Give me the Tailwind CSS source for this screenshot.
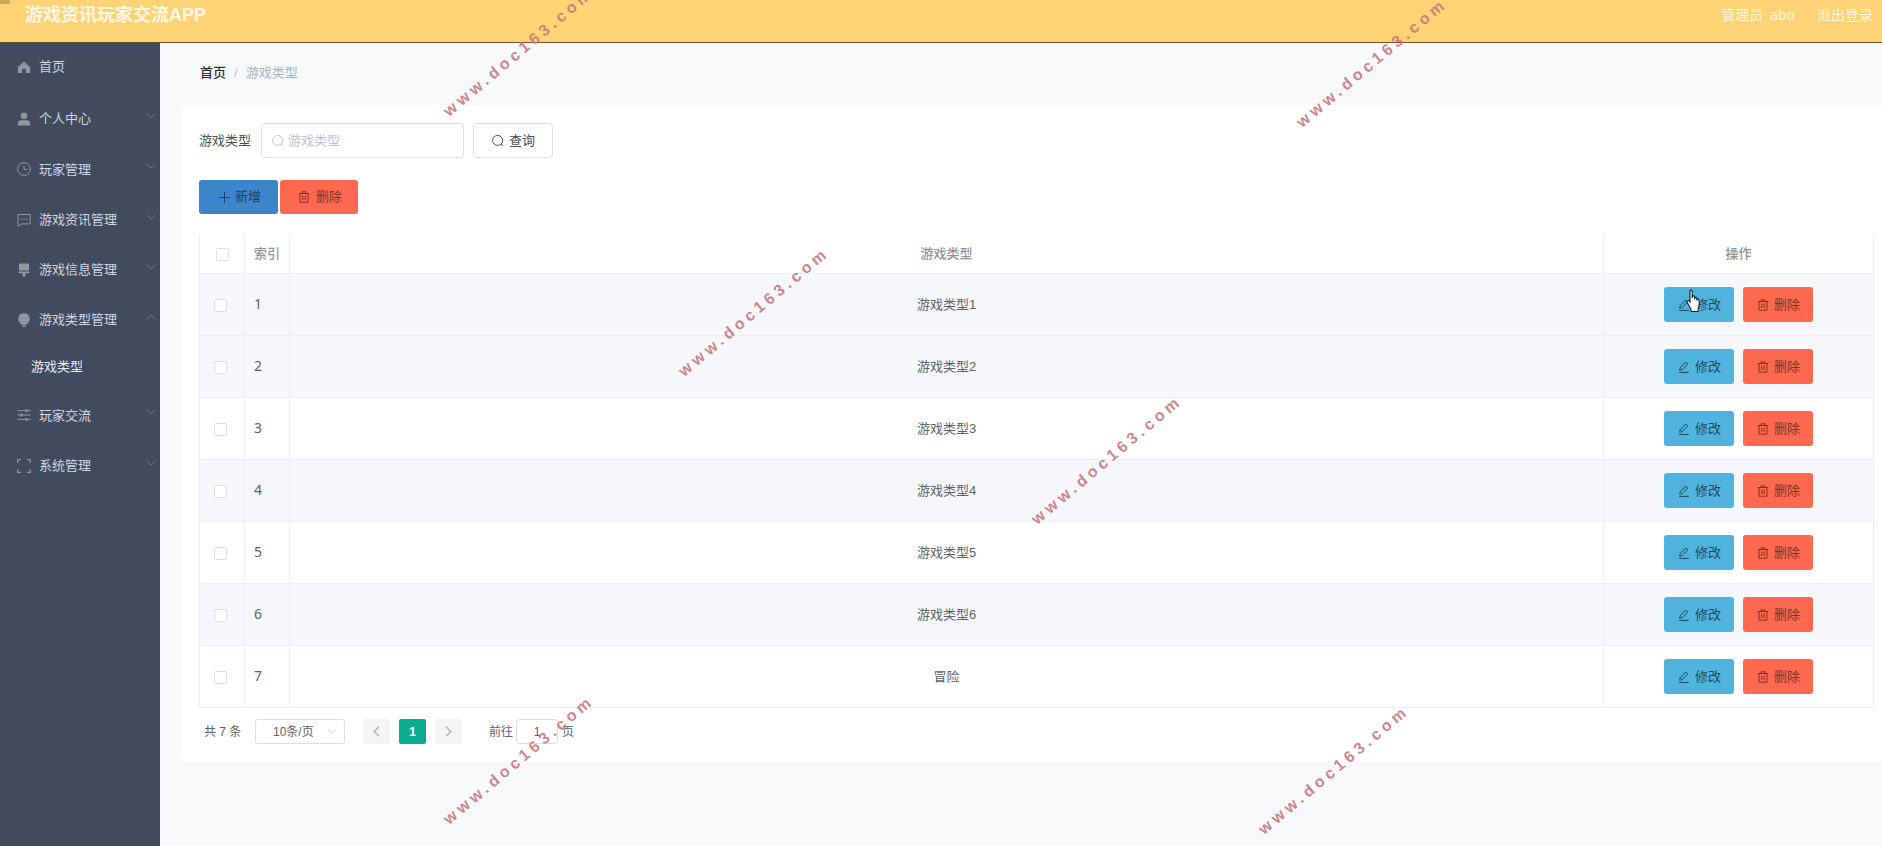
<!DOCTYPE html>
<html lang="zh">
<head>
<meta charset="utf-8">
<title>游戏类型</title>
<script src="https://cdn.jsdelivr.net/npm/@tailwindcss/browser@4"></script>
</head>
<body class="w-[1882px] h-[846px] overflow-hidden relative bg-[#f7f8fa] font-['Liberation_Sans','Noto_Sans_CJK_SC',sans-serif] text-[13px] text-[#606266]">
<svg class="hidden">
  <symbol id="search" viewBox="0 0 14 14"><circle cx="6.6" cy="6.4" r="5" fill="none" stroke="currentColor" stroke-width="1"/><path d="M10.2 10l1.8 2" stroke="currentColor" stroke-width="1" fill="none"/></symbol>
  <symbol id="trash" viewBox="0 0 12 12"><path d="M.8 2.5h10.4M4 2.5V.8h4v1.7M2 2.5v8.7h8V2.5M4.8 4.5v4.6M7.2 4.5v4.6" stroke="currentColor" stroke-width="1" fill="none"/></symbol>
  <symbol id="edit" viewBox="0 0 12 12"><path d="M1.700 9.300l.5-2.600L7.700 1l2 2-5.500 5.600zM1 11.400h10" stroke="currentColor" stroke-width="1" fill="none"/></symbol>
  <symbol id="chev" viewBox="0 0 10 6"><path d="M.7.7L5 5l4.300-4.300" stroke="currentColor" stroke-width="1" fill="none"/></symbol>
  <symbol id="chevup" viewBox="0 0 10 6"><path d="M.7 5.300L5 1l4.300 4.300" stroke="currentColor" stroke-width="1" fill="none"/></symbol>
</svg>

<header class="relative h-[43px] bg-[#fed376] border-b border-[#6e5426] flex items-center justify-between pb-[11px] pl-[25px] pr-[9px] text-white">
  <div class="absolute left-0 top-0 w-[10px] h-[4px] bg-[#cda863]"></div>
  <div class="text-[18px] font-bold text-[#fff8e6]">游戏资讯玩家交流APP</div>
  <div class="flex items-center gap-[22px] text-[14px] text-[#fff6e0]">
    <span class="flex gap-[7px]"><span>管理员</span><span class="tracking-[0.5px]">abo</span></span>
    <span>退出登录</span>
  </div>
</header>

<div class="flex h-[803px]">
  <aside class="w-[160px] shrink-0 bg-[#424b5d] text-[#cdd6e4]">
    <a class="h-[51px] flex items-center pl-[17px] pb-[3px] gap-[8px]">
      <svg class="w-[14px] h-[14px] text-[#8f95a1]" viewBox="0 0 14 14"><path d="M7 1.500L.8 7.200V13h4.400V9h3.600v4h4.400V7.200z" fill="currentColor"/></svg>
      <span>首页</span>
    </a>
    <a class="h-[50.25px] flex items-center pl-[17px] gap-[8px] relative">
      <svg class="w-[14px] h-[14px] text-[#8f95a1]" viewBox="0 0 14 14"><circle cx="7" cy="3.800" r="3.300" fill="currentColor"/><path d="M1 13.500V11c0-1.800 1.600-2.800 3-2.800h6c1.400 0 3 1 3 2.800v2.500z" fill="currentColor"/></svg>
      <span>个人中心</span>
      <svg class="absolute left-[146px] top-[19px] w-[10px] h-[6px] text-[#6d7687]"><use href="#chev"/></svg>
    </a>
    <a class="h-[50.25px] flex items-center pl-[17px] gap-[8px] relative">
      <svg class="w-[14px] h-[14px] text-[#8f95a1]" viewBox="0 0 14 14"><circle cx="7" cy="7" r="6.400" fill="none" stroke="currentColor"/><path d="M7 3.200V7.400h3.400" fill="none" stroke="currentColor"/></svg>
      <span>玩家管理</span>
      <svg class="absolute left-[146px] top-[19px] w-[10px] h-[6px] text-[#6d7687]"><use href="#chev"/></svg>
    </a>
    <a class="h-[50.25px] flex items-center pl-[17px] gap-[8px] relative">
      <svg class="w-[14px] h-[14px] text-[#8f95a1]" viewBox="0 0 14 14"><path d="M1 1.500h12.200v9.400H5L1 13.200z" fill="none" stroke="currentColor"/><circle cx="4.400" cy="6.200" r=".8" fill="currentColor"/><circle cx="7.100" cy="6.200" r=".8" fill="currentColor"/><circle cx="9.800" cy="6.200" r=".8" fill="currentColor"/></svg>
      <span>游戏资讯管理</span>
      <svg class="absolute left-[146px] top-[19px] w-[10px] h-[6px] text-[#6d7687]"><use href="#chev"/></svg>
    </a>
    <a class="h-[50.25px] flex items-center pl-[17px] gap-[8px] relative">
      <svg class="w-[14px] h-[14px] text-[#8f95a1]" viewBox="0 0 14 14"><path d="M2 .5h10v7H2zM1.500 8.500h11v1.800h-11zM5.500 10.300h3L8 14H6z" fill="currentColor"/></svg>
      <span>游戏信息管理</span>
      <svg class="absolute left-[146px] top-[19px] w-[10px] h-[6px] text-[#6d7687]"><use href="#chev"/></svg>
    </a>
    <a class="h-[50.25px] flex items-center pl-[17px] gap-[8px] relative">
      <svg class="w-[14px] h-[14px] text-[#8f95a1]" viewBox="0 0 14 14"><path d="M7 .3a5.600 5.600 0 0 0-3 10.400v1h6v-1A5.600 5.600 0 0 0 7 .3zM5 12.500h4V14H5z" fill="currentColor"/></svg>
      <span>游戏类型管理</span>
      <svg class="absolute left-[146px] top-[19px] w-[10px] h-[6px] text-[#6d7687]"><use href="#chevup"/></svg>
    </a>
    <a class="h-[45px] flex items-center pl-[31px] pb-[3px] text-[#e6ebf3]">游戏类型</a>
    <a class="h-[50.25px] flex items-center pl-[17px] gap-[8px] relative">
      <svg class="w-[14px] h-[14px] text-[#8f95a1]" viewBox="0 0 14 14"><path d="M.5 2.600h13M.5 7h13M.5 11.400h13" fill="none" stroke="currentColor"/><path d="M8.500 1.200h2V4h-2zM3.500 5.600h2v2.800h-2zM8.500 10h2v2.800h-2z" fill="currentColor"/></svg>
      <span>玩家交流</span>
      <svg class="absolute left-[146px] top-[19px] w-[10px] h-[6px] text-[#6d7687]"><use href="#chev"/></svg>
    </a>
    <a class="h-[50.25px] flex items-center pl-[17px] gap-[8px] relative">
      <svg class="w-[14px] h-[14px] text-[#8f95a1]" viewBox="0 0 14 14"><path d="M.7 4V.7H4M10 .7h3.300V4M13.300 10v3.300H10M4 13.300H.7V10" fill="none" stroke="currentColor" stroke-width="1.300"/></svg>
      <span>系统管理</span>
      <svg class="absolute left-[146px] top-[19px] w-[10px] h-[6px] text-[#6d7687]"><use href="#chev"/></svg>
    </a>
  </aside>

  <main class="flex-1 min-w-0">
    <nav class="h-[62px] pl-[40px] pt-[22px] flex items-start leading-[16px]">
      <span class="font-medium text-[#303133]">首页</span>
      <span class="mx-[8px] text-[#b4bccc]">/</span>
      <span class="text-[#a8b3c5]">游戏类型</span>
    </nav>
    <section class="ml-[21px] bg-white pl-[18px] pr-[8px] pt-[18px] pb-[18px]">
      <div class="flex items-center h-[35px]">
        <label class="w-[62px] text-[#4a4d52]">游戏类型</label>
        <div class="w-[203px] h-[35px] border border-[#dcdfe6] rounded-[4px] flex items-center pl-[9px] gap-[3px] text-[#c0c4cc]">
          <svg class="w-[14px] h-[14px]"><use href="#search"/></svg>
          <span>游戏类型</span>
        </div>
        <button class="ml-[9px] w-[80px] h-[35px] border border-[#dcdfe6] rounded-[4px] flex items-center justify-center gap-[4px] text-[#4a4d52]">
          <svg class="w-[14px] h-[14px]"><use href="#search"/></svg>
          <span>查询</span>
        </button>
      </div>
      <div class="flex gap-[2px] mt-[22px]">
        <button class="w-[79px] h-[34px] rounded-[3px] bg-[#3d85cb] flex items-center justify-center gap-[5px] pl-[3px] text-[#1f3f60]">
          <svg class="w-[11px] h-[11px]" viewBox="0 0 11 11"><path d="M5.500 0v11M0 5.500h11" stroke="currentColor" fill="none"/></svg>
          <span>新增</span>
        </button>
        <button class="w-[78px] h-[34px] rounded-[3px] bg-[#fe6950] flex items-center justify-center gap-[6px] pl-[2px] text-[#7e3328]">
          <svg class="w-[12px] h-[12px]"><use href="#trash"/></svg>
          <span>删除</span>
        </button>
      </div>

      <table class="mt-[20px] table-fixed w-[1675px] border-separate border-spacing-0 border-l border-[#ebeef5]">
        <colgroup><col class="w-[45px]"><col class="w-[45px]"><col class="w-[1314px]"><col class="w-[270px]"></colgroup>
        <thead>
          <tr class="h-[40px] text-[#909399]">
            <th class="border-r border-b border-[#ebeef5] pl-[16px] text-left font-normal"><span class="block w-[13px] h-[13px] translate-y-[1px] border border-[#dcdfe6] rounded-[2px]"></span></th>
            <th class="border-r border-b border-[#ebeef5] pl-[9px] text-left font-medium">索引</th>
            <th class="border-r border-b border-[#ebeef5] font-medium">游戏类型</th>
            <th class="border-r border-b border-[#ebeef5] font-medium">操作</th>
          </tr>
        </thead>
        <tbody>
          <tr class="h-[62px] bg-[#f5f7fb]">
            <td class="border-r border-b border-[#ebeef5] pl-[14px]"><span class="block w-[13px] h-[13px] translate-y-[1px] bg-white border border-[#dcdfe6] rounded-[2px]"></span></td>
            <td class="border-r border-b border-[#ebeef5] pl-[9px] pb-[2px] text-[14px] font-['Noto_Sans']">1</td>
            <td class="border-r border-b border-[#ebeef5] text-center">游戏类型1</td>
            <td class="border-r border-b border-[#ebeef5]"><div class="flex justify-center gap-[9px]">
              <button class="w-[70px] h-[35px] rounded-[3px] bg-[#4fb3dd] flex items-center justify-center gap-[5px] pl-[1px] text-[#1f4a60]"><svg class="w-[12px] h-[12px]"><use href="#edit"/></svg><span>修改</span></button>
              <button class="w-[70px] h-[35px] rounded-[3px] bg-[#fe6950] flex items-center justify-center gap-[5px] pl-[1px] text-[#7e3328]"><svg class="w-[12px] h-[12px]"><use href="#trash"/></svg><span>删除</span></button>
            </div></td>
          </tr>
          <tr class="h-[62px] bg-[#f5f7fb]">
            <td class="border-r border-b border-[#ebeef5] pl-[14px]"><span class="block w-[13px] h-[13px] translate-y-[1px] bg-white border border-[#dcdfe6] rounded-[2px]"></span></td>
            <td class="border-r border-b border-[#ebeef5] pl-[9px] pb-[2px] text-[14px] font-['Noto_Sans']">2</td>
            <td class="border-r border-b border-[#ebeef5] text-center">游戏类型2</td>
            <td class="border-r border-b border-[#ebeef5]"><div class="flex justify-center gap-[9px]">
              <button class="w-[70px] h-[35px] rounded-[3px] bg-[#4fb3dd] flex items-center justify-center gap-[5px] pl-[1px] text-[#1f4a60]"><svg class="w-[12px] h-[12px]"><use href="#edit"/></svg><span>修改</span></button>
              <button class="w-[70px] h-[35px] rounded-[3px] bg-[#fe6950] flex items-center justify-center gap-[5px] pl-[1px] text-[#7e3328]"><svg class="w-[12px] h-[12px]"><use href="#trash"/></svg><span>删除</span></button>
            </div></td>
          </tr>
          <tr class="h-[62px] bg-white">
            <td class="border-r border-b border-[#ebeef5] pl-[14px]"><span class="block w-[13px] h-[13px] translate-y-[1px] bg-white border border-[#dcdfe6] rounded-[2px]"></span></td>
            <td class="border-r border-b border-[#ebeef5] pl-[9px] pb-[2px] text-[14px] font-['Noto_Sans']">3</td>
            <td class="border-r border-b border-[#ebeef5] text-center">游戏类型3</td>
            <td class="border-r border-b border-[#ebeef5]"><div class="flex justify-center gap-[9px]">
              <button class="w-[70px] h-[35px] rounded-[3px] bg-[#4fb3dd] flex items-center justify-center gap-[5px] pl-[1px] text-[#1f4a60]"><svg class="w-[12px] h-[12px]"><use href="#edit"/></svg><span>修改</span></button>
              <button class="w-[70px] h-[35px] rounded-[3px] bg-[#fe6950] flex items-center justify-center gap-[5px] pl-[1px] text-[#7e3328]"><svg class="w-[12px] h-[12px]"><use href="#trash"/></svg><span>删除</span></button>
            </div></td>
          </tr>
          <tr class="h-[62px] bg-[#f5f7fb]">
            <td class="border-r border-b border-[#ebeef5] pl-[14px]"><span class="block w-[13px] h-[13px] translate-y-[1px] bg-white border border-[#dcdfe6] rounded-[2px]"></span></td>
            <td class="border-r border-b border-[#ebeef5] pl-[9px] pb-[2px] text-[14px] font-['Noto_Sans']">4</td>
            <td class="border-r border-b border-[#ebeef5] text-center">游戏类型4</td>
            <td class="border-r border-b border-[#ebeef5]"><div class="flex justify-center gap-[9px]">
              <button class="w-[70px] h-[35px] rounded-[3px] bg-[#4fb3dd] flex items-center justify-center gap-[5px] pl-[1px] text-[#1f4a60]"><svg class="w-[12px] h-[12px]"><use href="#edit"/></svg><span>修改</span></button>
              <button class="w-[70px] h-[35px] rounded-[3px] bg-[#fe6950] flex items-center justify-center gap-[5px] pl-[1px] text-[#7e3328]"><svg class="w-[12px] h-[12px]"><use href="#trash"/></svg><span>删除</span></button>
            </div></td>
          </tr>
          <tr class="h-[62px] bg-white">
            <td class="border-r border-b border-[#ebeef5] pl-[14px]"><span class="block w-[13px] h-[13px] translate-y-[1px] bg-white border border-[#dcdfe6] rounded-[2px]"></span></td>
            <td class="border-r border-b border-[#ebeef5] pl-[9px] pb-[2px] text-[14px] font-['Noto_Sans']">5</td>
            <td class="border-r border-b border-[#ebeef5] text-center">游戏类型5</td>
            <td class="border-r border-b border-[#ebeef5]"><div class="flex justify-center gap-[9px]">
              <button class="w-[70px] h-[35px] rounded-[3px] bg-[#4fb3dd] flex items-center justify-center gap-[5px] pl-[1px] text-[#1f4a60]"><svg class="w-[12px] h-[12px]"><use href="#edit"/></svg><span>修改</span></button>
              <button class="w-[70px] h-[35px] rounded-[3px] bg-[#fe6950] flex items-center justify-center gap-[5px] pl-[1px] text-[#7e3328]"><svg class="w-[12px] h-[12px]"><use href="#trash"/></svg><span>删除</span></button>
            </div></td>
          </tr>
          <tr class="h-[62px] bg-[#f5f7fb]">
            <td class="border-r border-b border-[#ebeef5] pl-[14px]"><span class="block w-[13px] h-[13px] translate-y-[1px] bg-white border border-[#dcdfe6] rounded-[2px]"></span></td>
            <td class="border-r border-b border-[#ebeef5] pl-[9px] pb-[2px] text-[14px] font-['Noto_Sans']">6</td>
            <td class="border-r border-b border-[#ebeef5] text-center">游戏类型6</td>
            <td class="border-r border-b border-[#ebeef5]"><div class="flex justify-center gap-[9px]">
              <button class="w-[70px] h-[35px] rounded-[3px] bg-[#4fb3dd] flex items-center justify-center gap-[5px] pl-[1px] text-[#1f4a60]"><svg class="w-[12px] h-[12px]"><use href="#edit"/></svg><span>修改</span></button>
              <button class="w-[70px] h-[35px] rounded-[3px] bg-[#fe6950] flex items-center justify-center gap-[5px] pl-[1px] text-[#7e3328]"><svg class="w-[12px] h-[12px]"><use href="#trash"/></svg><span>删除</span></button>
            </div></td>
          </tr>
          <tr class="h-[62px] bg-white">
            <td class="border-r border-b border-[#ebeef5] pl-[14px]"><span class="block w-[13px] h-[13px] translate-y-[1px] bg-white border border-[#dcdfe6] rounded-[2px]"></span></td>
            <td class="border-r border-b border-[#ebeef5] pl-[9px] pb-[2px] text-[14px] font-['Noto_Sans']">7</td>
            <td class="border-r border-b border-[#ebeef5] text-center">冒险</td>
            <td class="border-r border-b border-[#ebeef5]"><div class="flex justify-center gap-[9px]">
              <button class="w-[70px] h-[35px] rounded-[3px] bg-[#4fb3dd] flex items-center justify-center gap-[5px] pl-[1px] text-[#1f4a60]"><svg class="w-[12px] h-[12px]"><use href="#edit"/></svg><span>修改</span></button>
              <button class="w-[70px] h-[35px] rounded-[3px] bg-[#fe6950] flex items-center justify-center gap-[5px] pl-[1px] text-[#7e3328]"><svg class="w-[12px] h-[12px]"><use href="#trash"/></svg><span>删除</span></button>
            </div></td>
          </tr>
        </tbody>
      </table>

      <div class="flex items-center h-[25px] mt-[11px] pl-[5px] text-[12px]">
        <span class="w-[51px]">共 7 条</span>
        <div class="w-[90px] h-[25px] border border-[#dcdfe6] rounded-[3px] flex items-center justify-between pl-[17px] pr-[8px]">
          <span>10条/页</span>
          <svg class="w-[9px] h-[5px] text-[#c0c4cc]"><use href="#chev"/></svg>
        </div>
        <button class="ml-[18px] w-[27px] h-[25px] rounded-[2px] bg-[#f4f4f5] flex items-center justify-center text-[#a8abb2]"><svg class="w-[7px] h-[11px]" viewBox="0 0 7 11"><path d="M6 .8L1.200 5.500 6 10.200" fill="none" stroke="currentColor" stroke-width="1.200"/></svg></button>
        <button class="ml-[9px] w-[27px] h-[25px] rounded-[2px] bg-[#0bab91] flex items-center justify-center text-white font-bold">1</button>
        <button class="ml-[9px] w-[27px] h-[25px] rounded-[2px] bg-[#f4f4f5] flex items-center justify-center text-[#a8abb2]"><svg class="w-[7px] h-[11px]" viewBox="0 0 7 11"><path d="M1 .8l4.800 4.700L1 10.200" fill="none" stroke="currentColor" stroke-width="1.200"/></svg></button>
        <span class="ml-[27px] w-[27px]">前往</span>
        <div class="w-[42px] h-[25px] border border-[#dcdfe6] rounded-[3px] flex items-center justify-center">1</div>
        <span class="ml-[4px]">页</span>
      </div>
    </section>
  </main>
</div>

<svg class="absolute left-[1686px] top-[289px] w-[17px] h-[24px]" viewBox="0 0 17 24"><path d="M4 1.500c1-.8 2.200-.2 2.200 1V9l.3-1.600c.8-.9 2-.6 2.200.5v1.300c.6-.9 1.900-.7 2.200.3v1.200c.7-.8 2-.5 2.200.6.3 2.500 0 6-1 8.700v2.500H5v-2.200L1.200 13.500c-.8-1.200.5-2.600 1.700-1.700L4 13z" fill="#fff" stroke="#0f2233" stroke-width="1.100"/></svg>

<span class="absolute left-[519px] top-[52px] -translate-x-1/2 -translate-y-1/2 -rotate-[40deg] whitespace-nowrap font-bold text-[16px] tracking-[4.100px] text-[#c8757a]/90">www.doc163.com</span>
<span class="absolute left-[1372px] top-[63px] -translate-x-1/2 -translate-y-1/2 -rotate-[40deg] whitespace-nowrap font-bold text-[16px] tracking-[4.100px] text-[#c8757a]/90">www.doc163.com</span>
<span class="absolute left-[754px] top-[312px] -translate-x-1/2 -translate-y-1/2 -rotate-[40deg] whitespace-nowrap font-bold text-[16px] tracking-[4.100px] text-[#c8757a]/90">www.doc163.com</span>
<span class="absolute left-[1107px] top-[460px] -translate-x-1/2 -translate-y-1/2 -rotate-[40deg] whitespace-nowrap font-bold text-[16px] tracking-[4.100px] text-[#c8757a]/90">www.doc163.com</span>
<span class="absolute left-[519px] top-[760px] -translate-x-1/2 -translate-y-1/2 -rotate-[40deg] whitespace-nowrap font-bold text-[16px] tracking-[4.100px] text-[#c8757a]/90">www.doc163.com</span>
<span class="absolute left-[1334px] top-[770px] -translate-x-1/2 -translate-y-1/2 -rotate-[40deg] whitespace-nowrap font-bold text-[16px] tracking-[4.100px] text-[#c8757a]/90">www.doc163.com</span>
</body>
</html>
